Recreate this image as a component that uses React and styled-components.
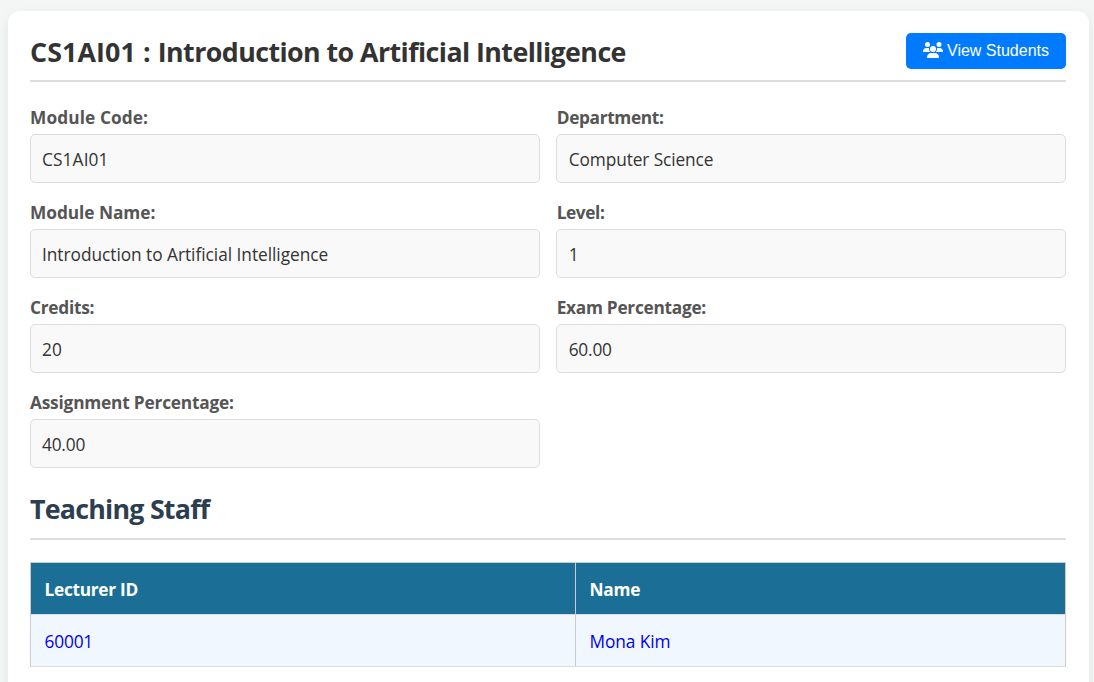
import React from 'react';
import styled, { createGlobalStyle } from 'styled-components';
import { FaUsers } from 'react-icons/fa6';

const GlobalStyle = createGlobalStyle`
  * { box-sizing: border-box; }
  body {
    margin: 0;
    background: #f4f6f6;
    font-family: 'Segoe UI', 'Open Sans', 'Noto Sans', sans-serif;
    font-size: 17.3px;
    color: #333;
  }
`;

const Page = styled.div`
  display: flow-root;
  height: 100vh;
  overflow: hidden;
`;

const Card = styled.main`
  margin: 11px 5px 0 8px;
  padding: 22px 23px 40px 22px;
  min-height: 671px;
  background: #fff;
  border-radius: 12px 12px 0 0;
  box-shadow: 0 4px 12px rgba(0, 0, 0, 0.08);
`;

const Header = styled.header`
  display: flex;
  justify-content: space-between;
  align-items: flex-start;
  height: 49px;
  border-bottom: 2px solid #ddd;
`;

const Title = styled.h1`
  margin: 0;
  font-size: 26.8px;
  line-height: 38px;
  font-weight: 700;
  white-space: nowrap;
  letter-spacing: -0.57px;
`;

const TitleCode = styled.span`
  letter-spacing: 0.1px;
`;

const Button = styled.button`
  display: flex;
  align-items: center;
  justify-content: center;
  gap: 4px;
  width: 160px;
  height: 36px;
  padding: 0 0 1px;
  border: 0;
  border-radius: 5px;
  background: #007bff;
  color: #fff;
  font: 16px/18px 'Liberation Sans', Arial, sans-serif;
  white-space: nowrap;

  svg { width: 20px; height: 16px; margin-bottom: 1px; }
`;

const Details = styled.section`
  display: grid;
  grid-template-columns: 1fr 1fr;
  gap: 16px;
  margin-top: 22px;
`;

const Field = styled.div`
  display: flex;
  flex-direction: column;
  height: 79px;
`;

const Label = styled.label`
  height: 30px;
  line-height: 27px;
  font-weight: 700;
  color: #555;
  letter-spacing: ${(p) => p.$spacing || 0}px;

  ${Field}:nth-child(even) & { padding-left: 0.7px; }
`;

const Value = styled.div`
  height: 49px;
  padding: 0 11px;
  border: 1px solid #ddd;
  border-radius: 5px;
  background: #f9f9f9;
  line-height: 49px;
  letter-spacing: ${(p) => p.$spacing || 0}px;

  ${Field}:nth-child(even) & { padding-left: 11.7px; }
`;

const SectionTitle = styled.h2`
  height: 51px;
  margin: 21px 0 22px;
  border-bottom: 2px solid #ddd;
  font-size: 26.8px;
  line-height: 40px;
  font-weight: 700;
  color: #2c3e50;
  letter-spacing: -0.77px;
`;

const Table = styled.table`
  width: 100%;
  table-layout: fixed;
  border-collapse: separate;
  border-spacing: 0;
  border-top: 1px solid #ccc;
  border-left: 1px solid #ccc;
`;

const IdColumn = styled.col`
  width: 545px;
`;

const HeadCell = styled.th`
  height: 52px;
  padding: 2px 13.6px 0;
  border-right: 1px solid #ccc;
  border-bottom: 1px solid #ddd;
  background: #1b6f97;
  color: #fff;
  text-align: left;
  font-weight: 700;
  letter-spacing: -0.3px;
`;

const Cell = styled.td`
  height: 52px;
  padding: 2px 13.6px 0;
  border-right: 1px solid #ccc;
  border-bottom: 1px solid #ddd;
  background: #f0f7ff;
`;

const StaffLink = styled.a`
  color: #00e;
  text-decoration: none;
  letter-spacing: ${(p) => p.$spacing || 0}px;
`;

const fields = [
  { label: 'Module Code:', value: 'CS1AI01', labelSpacing: 0.09, valueSpacing: 0.12 },
  { label: 'Department:', value: 'Computer Science', labelSpacing: -0.35, valueSpacing: -0.1 },
  { label: 'Module Name:', value: 'Introduction to Artificial Intelligence', labelSpacing: -0.05, valueSpacing: -0.03 },
  { label: 'Level:', value: '1', labelSpacing: -0.4 },
  { label: 'Credits:', value: '20', labelSpacing: -0.25 },
  { label: 'Exam Percentage:', value: '60.00', labelSpacing: -0.28, valueSpacing: -0.2 },
  { label: 'Assignment Percentage:', value: '40.00', labelSpacing: -0.2, valueSpacing: -0.2 },
];

export default function App() {
  return (
    <Page>
      <GlobalStyle />
      <Card>
        <Header>
          <Title><TitleCode>CS1AI01 : </TitleCode>Introduction to Artificial Intelligence</Title>
          <Button><FaUsers />View Students</Button>
        </Header>
        <Details>
          {fields.map((f) => (
            <Field key={f.label}>
              <Label $spacing={f.labelSpacing}>{f.label}</Label>
              <Value $spacing={f.valueSpacing}>{f.value}</Value>
            </Field>
          ))}
        </Details>
        <SectionTitle>Teaching Staff</SectionTitle>
        <Table>
          <colgroup><IdColumn /><col /></colgroup>
          <thead>
            <tr><HeadCell>Lecturer ID</HeadCell><HeadCell>Name</HeadCell></tr>
          </thead>
          <tbody>
            <tr>
              <Cell><StaffLink $spacing={-0.2}>60001</StaffLink></Cell>
              <Cell><StaffLink $spacing={-0.1}>Mona Kim</StaffLink></Cell>
            </tr>
          </tbody>
        </Table>
      </Card>
    </Page>
  );
}
